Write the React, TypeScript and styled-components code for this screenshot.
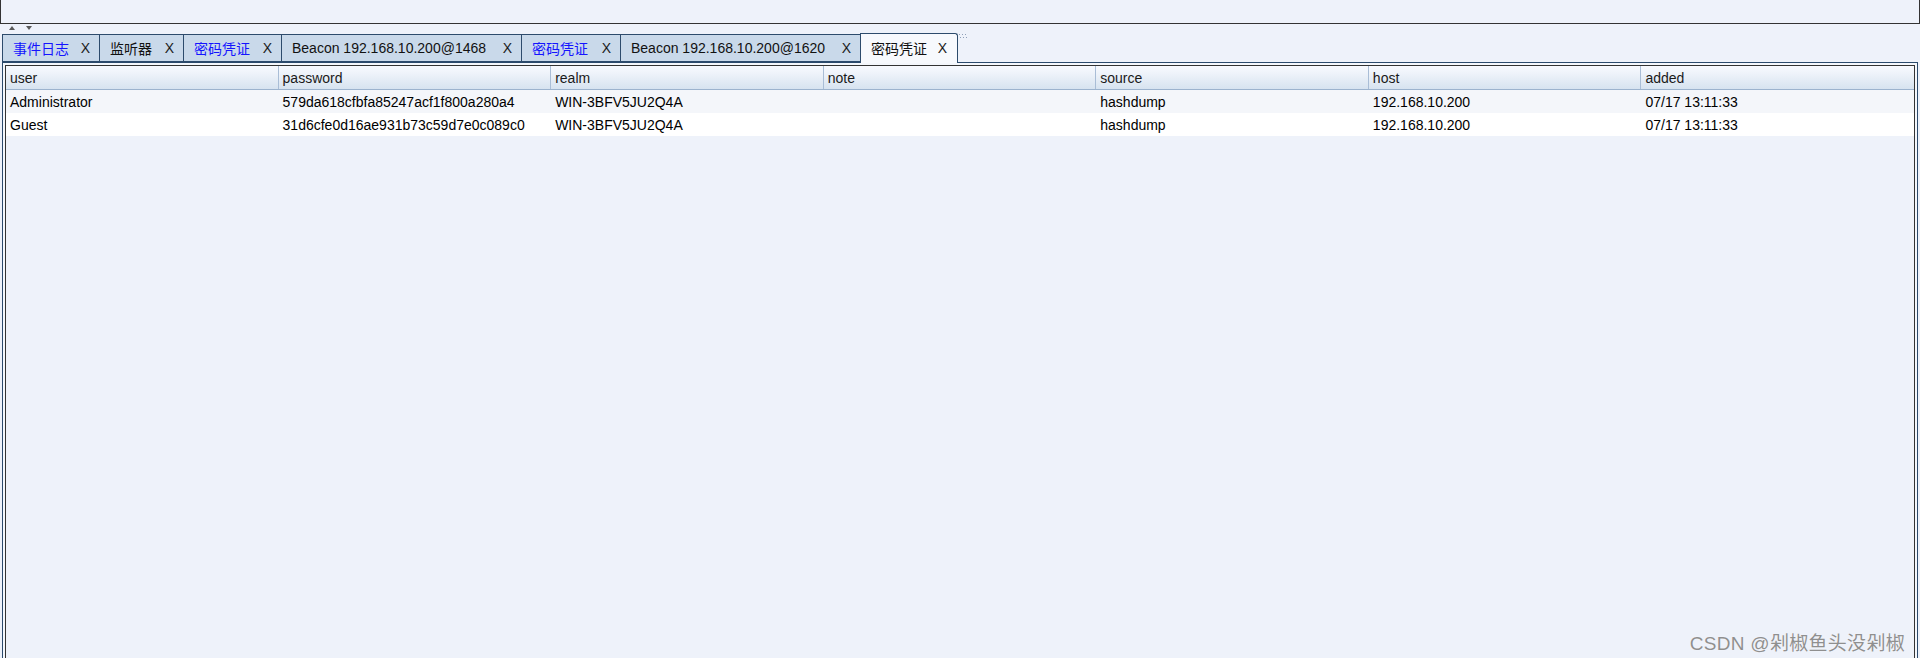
import React from "react";
import styled, { createGlobalStyle } from "styled-components";

const GlobalStyle = createGlobalStyle`
  html, body {
    margin: 0;
    padding: 0;
    background: #eef2fa;
    overflow: hidden;
  }
  body {
    font-family: "Liberation Sans", Arial, "Noto Sans CJK SC", sans-serif;
  }
`;

const Page = styled.div`
  position: relative;
  display: flex;
  flex-direction: column;
  width: 1920px;
  height: 664px;
  background: #eef2fa;
`;

const TopPanel = styled.div`
  height: 23px;
  flex: none;
  border-left: 1px solid #333;
  border-right: 1px solid #333;
  border-bottom: 1px solid #333;
  background: #eef2fa;
`;

const Divider = styled.div`
  height: 9px;
  flex: none;
  display: flex;
  align-items: flex-start;
  padding-top: 2px;
  box-sizing: border-box;
`;

const Arrows = styled.div`
  display: flex;
  gap: 11px;
  padding-left: 9px;
  width: 940px;
  flex: none;
`;

const Grip = styled.div`
  flex: none;
  margin-top: -1px;
`;

const TabBar = styled.div`
  height: 29px;
  flex: none;
  display: flex;
  align-items: flex-end;
  padding-left: 2px;
`;

const Tab = styled.div<{ $active?: boolean; $w: number }>`
  box-sizing: border-box;
  width: ${(p) => p.$w + 1}px;
  height: ${(p) => (p.$active ? 30 : 28)}px;
  margin-left: -1px;
  &:first-child {
    margin-left: 0;
  }
  margin-bottom: ${(p) => (p.$active ? -1 : 0)}px;
  position: ${(p) => (p.$active ? "relative" : "static")};
  z-index: ${(p) => (p.$active ? 1 : 0)};
  display: flex;
  align-items: center;
  justify-content: space-between;
  padding: ${(p) => (p.$active ? "0 10px 2px 10px" : "0 9px 0 10px")};
  background: ${(p) => (p.$active ? "#f7f9fd" : "#c9d9ea")};
  border: 1px solid #2d4b6c;
  border-bottom: ${(p) => (p.$active ? "none" : "1px solid #2d4b6c")};
  border-top-right-radius: ${(p) => (p.$active ? "3px" : "0")};
`;

const TabLabel = styled.span<{ $blue?: boolean }>`
  font-family: "Liberation Sans", Arial, "Noto Sans CJK SC", sans-serif;
  font-size: 14px;
  color: ${(p) => (p.$blue ? "#1414ff" : "#111")};
  white-space: nowrap;
`;

const CloseX = styled.span`
  font-family: "Liberation Sans", Arial, sans-serif;
  font-size: 14px;
  color: #1b1b1b;
  flex: none;
  margin-left: 6px;
`;

const TabBody = styled.div`
  flex: 1;
  margin: 0 2px;
  border: 1px solid #2b4a6c;
  padding: 2px;
  background: #f4f7fc;
  display: flex;
  min-height: 0;
`;

const ScrollPane = styled.div`
  flex: 1;
  border: 1px solid #333;
  background: #eef2fa;
  display: flex;
  flex-direction: column;
`;

const HeaderRow = styled.div`
  display: grid;
  grid-template-columns: repeat(7, 1fr);
  height: 24px;
  box-sizing: border-box;
  background: linear-gradient(#f8faff 0%, #eaf0f8 45%, #d7e3f0 100%);
  border-bottom: 1px solid #9cb3ce;
`;

const HeaderCell = styled.div`
  display: flex;
  align-items: center;
  padding-left: 4px;
  font-size: 14px;
  color: #1a1a1a;
  border-right: 1px solid #a9bdd6;
  &:last-child {
    border-right: none;
  }
`;

const Row = styled.div<{ $odd: boolean }>`
  display: grid;
  grid-template-columns: repeat(7, 1fr);
  height: 23px;
  background: ${(p) => (p.$odd ? "#f4f6fa" : "#ffffff")};
`;

const Cell = styled.div`
  display: flex;
  align-items: center;
  padding-left: 4px;
  font-size: 14px;
  color: #000;
  white-space: nowrap;
  overflow: hidden;
`;

const Watermark = styled.div`
  position: absolute;
  right: 15px;
  top: 628px;
  font-family: "Liberation Sans", Arial, "Noto Sans CJK SC", sans-serif;
  font-size: 19px;
  letter-spacing: 0.3px;
  color: #8f8f8f;
  text-shadow: 0 0 1px #ffffff;
  white-space: nowrap;
`;

const tabs = [
  { label: "事件日志", blue: true, w: 97 },
  { label: "监听器", blue: false, w: 84 },
  { label: "密码凭证", blue: true, w: 98 },
  { label: "Beacon 192.168.10.200@1468", blue: false, w: 240 },
  { label: "密码凭证", blue: true, w: 99 },
  { label: "Beacon 192.168.10.200@1620", blue: false, w: 240 },
  { label: "密码凭证", blue: false, w: 97, active: true },
];

const columns = ["user", "password", "realm", "note", "source", "host", "added"];

const rows = [
  ["Administrator", "579da618cfbfa85247acf1f800a280a4", "WIN-3BFV5JU2Q4A", "", "hashdump", "192.168.10.200", "07/17 13:11:33"],
  ["Guest", "31d6cfe0d16ae931b73c59d7e0c089c0", "WIN-3BFV5JU2Q4A", "", "hashdump", "192.168.10.200", "07/17 13:11:33"],
];

const UpArrow = () => (
  <svg width="6" height="4" viewBox="0 0 6 4">
    <path d="M0 4 L3 0 L6 4 Z" fill="#5a5a5a" />
  </svg>
);

const DownArrow = () => (
  <svg width="6" height="4" viewBox="0 0 6 4">
    <path d="M0 0 L6 0 L3 4 Z" fill="#5a5a5a" />
  </svg>
);

const GripDots = () => (
  <svg width="20" height="5" viewBox="0 0 20 5">
    {[0, 1, 2, 3, 4, 5].map((i) => (
      <rect key={"a" + i} x={1 + i * 3} y={0} width="1" height="1" fill="#8fa0b8" />
    ))}
    {[0, 1, 2, 3, 4, 5].map((i) => (
      <rect key={"b" + i} x={2 + i * 3} y={3} width="1" height="1" fill="#8fa0b8" />
    ))}
  </svg>
);

export default function App() {
  return (
    <>
      <GlobalStyle />
      <Page>
        <TopPanel />
        <Divider>
          <Arrows>
            <UpArrow />
            <DownArrow />
          </Arrows>
          <Grip>
            <GripDots />
          </Grip>
        </Divider>
        <TabBar>
          {tabs.map((t, i) => (
            <Tab key={i} $active={t.active} $w={t.w}>
              <TabLabel $blue={t.blue}>{t.label}</TabLabel>
              <CloseX>X</CloseX>
            </Tab>
          ))}
        </TabBar>
        <TabBody>
          <ScrollPane>
            <HeaderRow>
              {columns.map((c) => (
                <HeaderCell key={c}>{c}</HeaderCell>
              ))}
            </HeaderRow>
            {rows.map((r, i) => (
              <Row key={i} $odd={i % 2 === 0}>
                {r.map((v, j) => (
                  <Cell key={j}>{v}</Cell>
                ))}
              </Row>
            ))}
          </ScrollPane>
        </TabBody>
        <Watermark>CSDN @剁椒鱼头没剁椒</Watermark>
      </Page>
    </>
  );
}
